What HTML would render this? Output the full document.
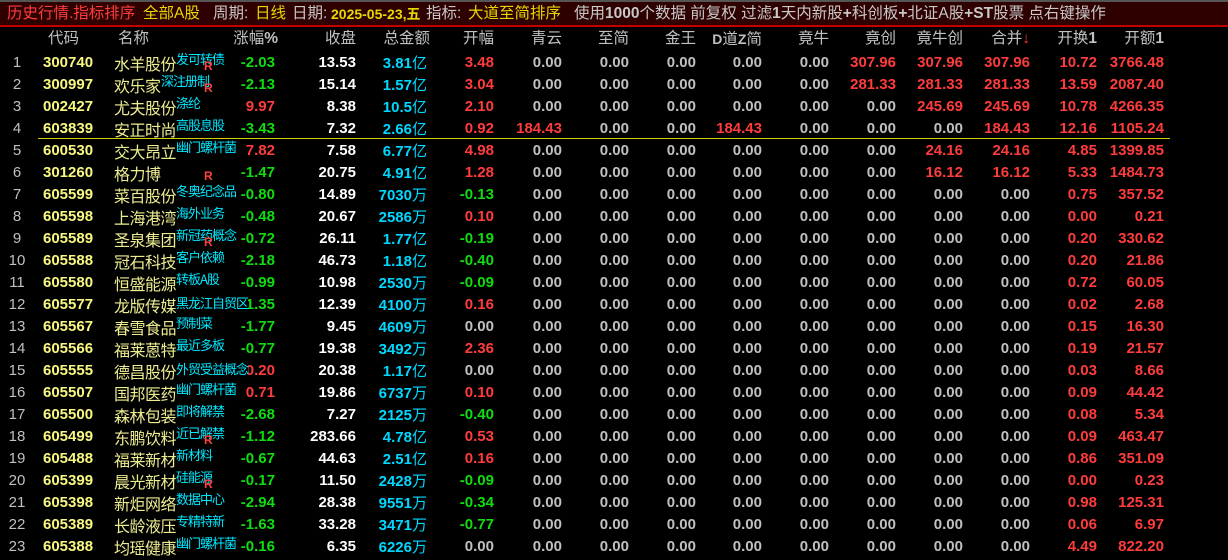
<!DOCTYPE html>
<html><head><meta charset="utf-8">
<style>
*{margin:0;padding:0;box-sizing:border-box}
html,body{width:1228px;height:560px;background:#000;overflow:hidden}
body{position:relative;font-family:"Liberation Sans","Noto Sans CJK SC",sans-serif}
#top{position:absolute;left:0;top:0;width:1228px;height:27px;background:#2e0000;border-top:2px solid #555;border-bottom:2px solid #c00000}
#top span{position:absolute;top:1px;font-size:15.5px;line-height:22px;white-space:nowrap}
.tr{color:#ff3c3c}.ty{color:#e8d800}.tg2{color:#c8c8c8}
#hdr{position:absolute;top:28px;left:0;width:1228px;height:22px;line-height:22px;font-size:15.5px;color:#c0c0c0}
#hdr span{position:absolute;top:0;white-space:nowrap}
.r{position:absolute;left:0;width:1228px;height:22px;line-height:22px;font:bold 15px/22px "Liberation Sans",sans-serif;color:#c0c0c0}
.r span{position:absolute;top:0;white-space:nowrap}
.r .i{left:6px;width:22px;text-align:center;font-weight:normal;color:#c0c0c0}
.r .cd{left:43px;color:#f8f880}
.r .nm{left:114px;font:16px/22px "Noto Sans CJK SC",sans-serif;color:#ecec90;letter-spacing:-0.5px;top:0}
.r .t{left:176px;top:-4px;font:13px/22px "Noto Sans CJK SC",sans-serif;color:#00e8ff;letter-spacing:-1px}
.r .R{left:204px;top:3px;font:bold 12px/22px "Liberation Sans",sans-serif;color:#ff4040}
.r .u{font:15px/22px "Noto Sans CJK SC",sans-serif}
.k1{right:953px}.k2{right:872px}.k3{right:801px}.k4{right:734px}.k5{right:666px}.k6{right:599px}.k7{right:532px}.k8{right:466px}.k9{right:399px}.k10{right:332px}.k11{right:265px}.k12{right:198px}.k13{right:131px}.k14{right:64px}
.g{color:#10dc10}.d{color:#ff3c3c}.w{color:#ffffff}.c{color:#00d8ff}
#sep{position:absolute;left:38px;top:138px;width:1132px;height:1px;background:#d0d000}
</style></head><body>
<div id="top">
<span class="tr" style="left:7px">历史行情.指标排序</span>
<span class="ty" style="left:143px">全部A股</span>
<span class="tg2" style="left:213px">周期:</span>
<span class="ty" style="left:255px">日线</span>
<span class="tg2" style="left:292px">日期:</span>
<span class="ty" style="left:331px;font-weight:bold;font-size:14px">2025-05-23,五</span>
<span class="tg2" style="left:426px">指标:</span>
<span class="ty" style="left:468px">大道至简排序</span>
<span class="tg2" style="left:574px">使用<b>1000</b>个数据 前复权 过滤<b>1</b>天内新股<b>+</b>科创板<b>+</b>北证A股<b>+ST</b>股票 点右键操作</span>
</div>
<div id="hdr">
<span style="left:48px">代码</span>
<span style="left:118px">名称</span>
<span style="right:950px">涨幅<b>%</b></span>
<span class="k2">收盘</span>
<span style="right:798px">总金额</span>
<span class="k4">开幅</span>
<span class="k5">青云</span>
<span class="k6">至简</span>
<span class="k7">金王</span>
<span class="k8"><b style="font-size:14px">D</b>道<b style="font-size:14px">Z</b>简</span>
<span class="k9">竟牛</span>
<span class="k10">竟创</span>
<span class="k11">竟牛创</span>
<span class="k12">合并<span style="position:static;color:#ff3030">↓</span></span>
<span class="k13">开换<b>1</b></span>
<span class="k14">开额<b>1</b></span>
</div>

<div class="r" style="top:52px"><span class="i">1</span><span class="cd">300740</span><span class="nm">水羊股份</span><span class="t">发可转债</span><span class="R">R</span><span class="k1 g">-2.03</span><span class="k2 w">13.53</span><span class="k3 c">3.81<span class="u" style="position:static">亿</span></span><span class="k4 d">3.48</span><span class="k5">0.00</span><span class="k6">0.00</span><span class="k7">0.00</span><span class="k8">0.00</span><span class="k9">0.00</span><span class="k10 d">307.96</span><span class="k11 d">307.96</span><span class="k12 d">307.96</span><span class="k13 d">10.72</span><span class="k14 d">3766.48</span></div>
<div class="r" style="top:74px"><span class="i">2</span><span class="cd">300997</span><span class="nm">欢乐家</span><span class="t" style="left:161px">深注册制</span><span class="R">R</span><span class="k1 g">-2.13</span><span class="k2 w">15.14</span><span class="k3 c">1.57<span class="u" style="position:static">亿</span></span><span class="k4 d">3.04</span><span class="k5">0.00</span><span class="k6">0.00</span><span class="k7">0.00</span><span class="k8">0.00</span><span class="k9">0.00</span><span class="k10 d">281.33</span><span class="k11 d">281.33</span><span class="k12 d">281.33</span><span class="k13 d">13.59</span><span class="k14 d">2087.40</span></div>
<div class="r" style="top:96px"><span class="i">3</span><span class="cd">002427</span><span class="nm">尤夫股份</span><span class="t">涤纶</span><span class="k1 d">9.97</span><span class="k2 w">8.38</span><span class="k3 c">10.5<span class="u" style="position:static">亿</span></span><span class="k4 d">2.10</span><span class="k5">0.00</span><span class="k6">0.00</span><span class="k7">0.00</span><span class="k8">0.00</span><span class="k9">0.00</span><span class="k10">0.00</span><span class="k11 d">245.69</span><span class="k12 d">245.69</span><span class="k13 d">10.78</span><span class="k14 d">4266.35</span></div>
<div class="r" style="top:118px"><span class="i">4</span><span class="cd">603839</span><span class="nm">安正时尚</span><span class="t">高股息股</span><span class="k1 g">-3.43</span><span class="k2 w">7.32</span><span class="k3 c">2.66<span class="u" style="position:static">亿</span></span><span class="k4 d">0.92</span><span class="k5 d">184.43</span><span class="k6">0.00</span><span class="k7">0.00</span><span class="k8 d">184.43</span><span class="k9">0.00</span><span class="k10">0.00</span><span class="k11">0.00</span><span class="k12 d">184.43</span><span class="k13 d">12.16</span><span class="k14 d">1105.24</span></div>
<div id="sep"></div>
<div class="r" style="top:140px"><span class="i">5</span><span class="cd">600530</span><span class="nm">交大昂立</span><span class="t">幽门螺杆菌</span><span class="k1 d">7.82</span><span class="k2 w">7.58</span><span class="k3 c">6.77<span class="u" style="position:static">亿</span></span><span class="k4 d">4.98</span><span class="k5">0.00</span><span class="k6">0.00</span><span class="k7">0.00</span><span class="k8">0.00</span><span class="k9">0.00</span><span class="k10">0.00</span><span class="k11 d">24.16</span><span class="k12 d">24.16</span><span class="k13 d">4.85</span><span class="k14 d">1399.85</span></div>
<div class="r" style="top:162px"><span class="i">6</span><span class="cd">301260</span><span class="nm">格力博</span><span class="R">R</span><span class="k1 g">-1.47</span><span class="k2 w">20.75</span><span class="k3 c">4.91<span class="u" style="position:static">亿</span></span><span class="k4 d">1.28</span><span class="k5">0.00</span><span class="k6">0.00</span><span class="k7">0.00</span><span class="k8">0.00</span><span class="k9">0.00</span><span class="k10">0.00</span><span class="k11 d">16.12</span><span class="k12 d">16.12</span><span class="k13 d">5.33</span><span class="k14 d">1484.73</span></div>
<div class="r" style="top:184px"><span class="i">7</span><span class="cd">605599</span><span class="nm">菜百股份</span><span class="t">冬奥纪念品</span><span class="k1 g">-0.80</span><span class="k2 w">14.89</span><span class="k3 c">7030<span class="u" style="position:static">万</span></span><span class="k4 g">-0.13</span><span class="k5">0.00</span><span class="k6">0.00</span><span class="k7">0.00</span><span class="k8">0.00</span><span class="k9">0.00</span><span class="k10">0.00</span><span class="k11">0.00</span><span class="k12">0.00</span><span class="k13 d">0.75</span><span class="k14 d">357.52</span></div>
<div class="r" style="top:206px"><span class="i">8</span><span class="cd">605598</span><span class="nm">上海港湾</span><span class="t">海外业务</span><span class="k1 g">-0.48</span><span class="k2 w">20.67</span><span class="k3 c">2586<span class="u" style="position:static">万</span></span><span class="k4 d">0.10</span><span class="k5">0.00</span><span class="k6">0.00</span><span class="k7">0.00</span><span class="k8">0.00</span><span class="k9">0.00</span><span class="k10">0.00</span><span class="k11">0.00</span><span class="k12">0.00</span><span class="k13 d">0.00</span><span class="k14 d">0.21</span></div>
<div class="r" style="top:228px"><span class="i">9</span><span class="cd">605589</span><span class="nm">圣泉集团</span><span class="t">新冠药概念</span><span class="R">R</span><span class="k1 g">-0.72</span><span class="k2 w">26.11</span><span class="k3 c">1.77<span class="u" style="position:static">亿</span></span><span class="k4 g">-0.19</span><span class="k5">0.00</span><span class="k6">0.00</span><span class="k7">0.00</span><span class="k8">0.00</span><span class="k9">0.00</span><span class="k10">0.00</span><span class="k11">0.00</span><span class="k12">0.00</span><span class="k13 d">0.20</span><span class="k14 d">330.62</span></div>
<div class="r" style="top:250px"><span class="i">10</span><span class="cd">605588</span><span class="nm">冠石科技</span><span class="t">客户依赖</span><span class="k1 g">-2.18</span><span class="k2 w">46.73</span><span class="k3 c">1.18<span class="u" style="position:static">亿</span></span><span class="k4 g">-0.40</span><span class="k5">0.00</span><span class="k6">0.00</span><span class="k7">0.00</span><span class="k8">0.00</span><span class="k9">0.00</span><span class="k10">0.00</span><span class="k11">0.00</span><span class="k12">0.00</span><span class="k13 d">0.20</span><span class="k14 d">21.86</span></div>
<div class="r" style="top:272px"><span class="i">11</span><span class="cd">605580</span><span class="nm">恒盛能源</span><span class="t">转板A股</span><span class="k1 g">-0.99</span><span class="k2 w">10.98</span><span class="k3 c">2530<span class="u" style="position:static">万</span></span><span class="k4 g">-0.09</span><span class="k5">0.00</span><span class="k6">0.00</span><span class="k7">0.00</span><span class="k8">0.00</span><span class="k9">0.00</span><span class="k10">0.00</span><span class="k11">0.00</span><span class="k12">0.00</span><span class="k13 d">0.72</span><span class="k14 d">60.05</span></div>
<div class="r" style="top:294px"><span class="i">12</span><span class="cd">605577</span><span class="nm">龙版传媒</span><span class="k1 g">-1.35</span><span class="t" style="background:#000;line-height:17px;top:0">黑龙江自贸区</span><span class="k2 w">12.39</span><span class="k3 c">4100<span class="u" style="position:static">万</span></span><span class="k4 d">0.16</span><span class="k5">0.00</span><span class="k6">0.00</span><span class="k7">0.00</span><span class="k8">0.00</span><span class="k9">0.00</span><span class="k10">0.00</span><span class="k11">0.00</span><span class="k12">0.00</span><span class="k13 d">0.02</span><span class="k14 d">2.68</span></div>
<div class="r" style="top:316px"><span class="i">13</span><span class="cd">605567</span><span class="nm">春雪食品</span><span class="t">预制菜</span><span class="k1 g">-1.77</span><span class="k2 w">9.45</span><span class="k3 c">4609<span class="u" style="position:static">万</span></span><span class="k4">0.00</span><span class="k5">0.00</span><span class="k6">0.00</span><span class="k7">0.00</span><span class="k8">0.00</span><span class="k9">0.00</span><span class="k10">0.00</span><span class="k11">0.00</span><span class="k12">0.00</span><span class="k13 d">0.15</span><span class="k14 d">16.30</span></div>
<div class="r" style="top:338px"><span class="i">14</span><span class="cd">605566</span><span class="nm">福莱蒽特</span><span class="t">最近多板</span><span class="k1 g">-0.77</span><span class="k2 w">19.38</span><span class="k3 c">3492<span class="u" style="position:static">万</span></span><span class="k4 d">2.36</span><span class="k5">0.00</span><span class="k6">0.00</span><span class="k7">0.00</span><span class="k8">0.00</span><span class="k9">0.00</span><span class="k10">0.00</span><span class="k11">0.00</span><span class="k12">0.00</span><span class="k13 d">0.19</span><span class="k14 d">21.57</span></div>
<div class="r" style="top:360px"><span class="i">15</span><span class="cd">605555</span><span class="nm">德昌股份</span><span class="k1 d">0.20</span><span class="t" style="background:#000;line-height:17px;top:0">外贸受益概念</span><span class="k2 w">20.38</span><span class="k3 c">1.17<span class="u" style="position:static">亿</span></span><span class="k4">0.00</span><span class="k5">0.00</span><span class="k6">0.00</span><span class="k7">0.00</span><span class="k8">0.00</span><span class="k9">0.00</span><span class="k10">0.00</span><span class="k11">0.00</span><span class="k12">0.00</span><span class="k13 d">0.03</span><span class="k14 d">8.66</span></div>
<div class="r" style="top:382px"><span class="i">16</span><span class="cd">605507</span><span class="nm">国邦医药</span><span class="t">幽门螺杆菌</span><span class="k1 d">0.71</span><span class="k2 w">19.86</span><span class="k3 c">6737<span class="u" style="position:static">万</span></span><span class="k4 d">0.10</span><span class="k5">0.00</span><span class="k6">0.00</span><span class="k7">0.00</span><span class="k8">0.00</span><span class="k9">0.00</span><span class="k10">0.00</span><span class="k11">0.00</span><span class="k12">0.00</span><span class="k13 d">0.09</span><span class="k14 d">44.42</span></div>
<div class="r" style="top:404px"><span class="i">17</span><span class="cd">605500</span><span class="nm">森林包装</span><span class="t">即将解禁</span><span class="k1 g">-2.68</span><span class="k2 w">7.27</span><span class="k3 c">2125<span class="u" style="position:static">万</span></span><span class="k4 g">-0.40</span><span class="k5">0.00</span><span class="k6">0.00</span><span class="k7">0.00</span><span class="k8">0.00</span><span class="k9">0.00</span><span class="k10">0.00</span><span class="k11">0.00</span><span class="k12">0.00</span><span class="k13 d">0.08</span><span class="k14 d">5.34</span></div>
<div class="r" style="top:426px"><span class="i">18</span><span class="cd">605499</span><span class="nm">东鹏饮料</span><span class="t">近已解禁</span><span class="R">R</span><span class="k1 g">-1.12</span><span class="k2 w">283.66</span><span class="k3 c">4.78<span class="u" style="position:static">亿</span></span><span class="k4 d">0.53</span><span class="k5">0.00</span><span class="k6">0.00</span><span class="k7">0.00</span><span class="k8">0.00</span><span class="k9">0.00</span><span class="k10">0.00</span><span class="k11">0.00</span><span class="k12">0.00</span><span class="k13 d">0.09</span><span class="k14 d">463.47</span></div>
<div class="r" style="top:448px"><span class="i">19</span><span class="cd">605488</span><span class="nm">福莱新材</span><span class="t">新材料</span><span class="k1 g">-0.67</span><span class="k2 w">44.63</span><span class="k3 c">2.51<span class="u" style="position:static">亿</span></span><span class="k4 d">0.16</span><span class="k5">0.00</span><span class="k6">0.00</span><span class="k7">0.00</span><span class="k8">0.00</span><span class="k9">0.00</span><span class="k10">0.00</span><span class="k11">0.00</span><span class="k12">0.00</span><span class="k13 d">0.86</span><span class="k14 d">351.09</span></div>
<div class="r" style="top:470px"><span class="i">20</span><span class="cd">605399</span><span class="nm">晨光新材</span><span class="t">硅能源</span><span class="R">R</span><span class="k1 g">-0.17</span><span class="k2 w">11.50</span><span class="k3 c">2428<span class="u" style="position:static">万</span></span><span class="k4 g">-0.09</span><span class="k5">0.00</span><span class="k6">0.00</span><span class="k7">0.00</span><span class="k8">0.00</span><span class="k9">0.00</span><span class="k10">0.00</span><span class="k11">0.00</span><span class="k12">0.00</span><span class="k13 d">0.00</span><span class="k14 d">0.23</span></div>
<div class="r" style="top:492px"><span class="i">21</span><span class="cd">605398</span><span class="nm">新炬网络</span><span class="t">数据中心</span><span class="k1 g">-2.94</span><span class="k2 w">28.38</span><span class="k3 c">9551<span class="u" style="position:static">万</span></span><span class="k4 g">-0.34</span><span class="k5">0.00</span><span class="k6">0.00</span><span class="k7">0.00</span><span class="k8">0.00</span><span class="k9">0.00</span><span class="k10">0.00</span><span class="k11">0.00</span><span class="k12">0.00</span><span class="k13 d">0.98</span><span class="k14 d">125.31</span></div>
<div class="r" style="top:514px"><span class="i">22</span><span class="cd">605389</span><span class="nm">长龄液压</span><span class="t">专精特新</span><span class="k1 g">-1.63</span><span class="k2 w">33.28</span><span class="k3 c">3471<span class="u" style="position:static">万</span></span><span class="k4 g">-0.77</span><span class="k5">0.00</span><span class="k6">0.00</span><span class="k7">0.00</span><span class="k8">0.00</span><span class="k9">0.00</span><span class="k10">0.00</span><span class="k11">0.00</span><span class="k12">0.00</span><span class="k13 d">0.06</span><span class="k14 d">6.97</span></div>
<div class="r" style="top:536px"><span class="i">23</span><span class="cd">605388</span><span class="nm">均瑶健康</span><span class="t">幽门螺杆菌</span><span class="k1 g">-0.16</span><span class="k2 w">6.35</span><span class="k3 c">6226<span class="u" style="position:static">万</span></span><span class="k4">0.00</span><span class="k5">0.00</span><span class="k6">0.00</span><span class="k7">0.00</span><span class="k8">0.00</span><span class="k9">0.00</span><span class="k10">0.00</span><span class="k11">0.00</span><span class="k12">0.00</span><span class="k13 d">4.49</span><span class="k14 d">822.20</span></div>
</body></html>
